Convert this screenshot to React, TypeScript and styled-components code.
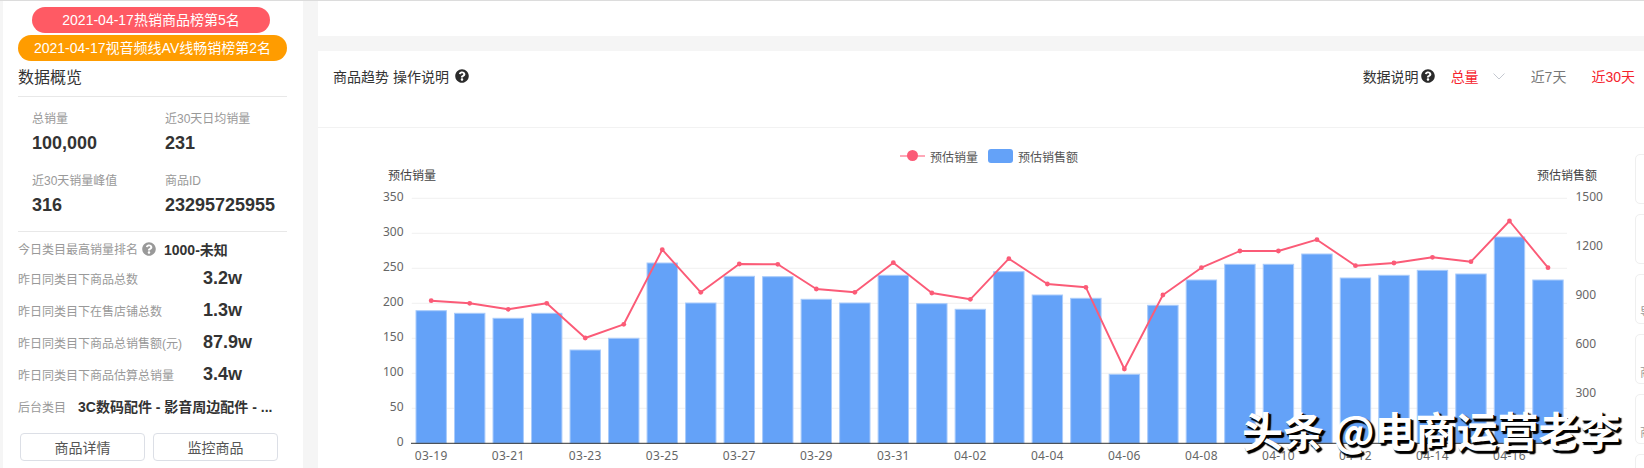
import React from 'react';
import styled, { createGlobalStyle } from 'styled-components';
import { FaQuestionCircle } from 'react-icons/fa';

const Global = createGlobalStyle`
  html, body { margin: 0; padding: 0; background: #f5f5f5; }
  body { font-family: "Liberation Sans", "Noto Sans CJK SC", sans-serif; }
  * { box-sizing: border-box; }
`;

const Page = styled.div`
  position: relative;
  width: 1644px;
  height: 468px;
  overflow: hidden;
  display: grid;
  grid-template-columns: 300px 1fr;
  column-gap: 15px;
  padding-left: 3px;
  background: #f5f5f5;
  border-top: 1px solid #dcdcdc;
`;

const Side = styled.aside`
  background: #fff;
  padding: 6px 16px 0 15px;
  display: flex;
  flex-direction: column;
`;

const Badge = styled.div<{ $bg: string; $w: number; $mx: number }>`
  width: ${p => p.$w}px;
  height: 26px;
  margin-left: ${p => p.$mx}px;
  margin-bottom: 2px;
  border-radius: 13px;
  background: ${p => p.$bg};
  color: #fff;
  font-size: 14px;
  line-height: 26px;
  text-align: center;
  white-space: nowrap;
`;

const SideTitle = styled.h2`
  margin: 2px 0 0;
  height: 32px;
  font-size: 16px;
  line-height: 26px;
  font-weight: 400;
  color: #333;
  border-bottom: 1px solid #e8e8e8;
`;

const StatGrid = styled.div`
  display: grid;
  grid-template-columns: 133px 1fr;
  grid-auto-rows: 62px;
  padding: 14px 0 0 14px;
  height: 135px;
  border-bottom: 1px solid #e8e8e8;
`;

const Stat = styled.div`
  display: flex;
  flex-direction: column;
  gap: 4px;
`;

const StatLabel = styled.span`
  font-size: 12px;
  line-height: 17px;
  color: #999;
`;

const StatValue = styled.span`
  font-size: 18px;
  line-height: 22px;
  font-weight: 700;
  color: #333;
`;

const InfoList = styled.div`
  display: flex;
  flex-direction: column;
  padding-top: 3px;
`;

const InfoRow = styled.div<{ $h?: number }>`
  height: ${p => p.$h ?? 32}px;
  display: flex;
  align-items: center;
`;

const InfoLabel = styled.span<{ $w?: number }>`
  font-size: 12px;
  color: #999;
  white-space: nowrap;
  flex: 0 0 ${p => (p.$w ? `${p.$w}px` : 'auto')};
`;

const Metric = styled.span`
  font-size: 18px;
  font-weight: 700;
  color: #333;
`;

const Strong = styled.span<{ $ml?: number }>`
  margin-left: ${p => p.$ml ?? 0}px;
  font-size: 14px;
  font-weight: 700;
  color: #333;
  white-space: nowrap;
`;

const HintIcon = styled(FaQuestionCircle)<{ $c: string; $ml?: number }>`
  width: 14px;
  height: 14px;
  margin-left: ${p => p.$ml ?? 0}px;
  color: ${p => p.$c};
  flex: none;
`;

const ButtonRow = styled.div`
  display: flex;
  gap: 8px;
  margin: 11px 0 0 2px;
`;

const Btn = styled.button`
  width: 125px;
  height: 28px;
  padding: 0;
  background: #fff;
  border: 1px solid #dcdfe6;
  border-radius: 4px;
  font: 14px "Liberation Sans", "Noto Sans CJK SC", sans-serif;
  color: #555;
`;

const Main = styled.main`
  display: flex;
  flex-direction: column;
  gap: 15px;
`;

const TopStrip = styled.div`
  height: 35px;
  background: #fff;
  flex: none;
`;

const Card = styled.section`
  flex: 1;
  background: #fff;
  min-height: 0;
`;

const CardHead = styled.header`
  height: 77px;
  padding: 0 9px 26px 15px;
  display: flex;
  align-items: center;
  border-bottom: 1px solid #f2f2f2;
  font-size: 14px;
  color: #333;
`;

const HeadTitle = styled.span`
  margin-right: 6px;
  white-space: nowrap;
`;

const HeadRight = styled.div`
  margin-left: auto;
  display: flex;
  align-items: center;
  white-space: nowrap;
`;

const HeadOption = styled.span<{ $active?: boolean; $ml: number }>`
  margin-left: ${p => p.$ml}px;
  color: ${p => (p.$active ? '#f5222d' : '#777')};
`;

const Chevron = styled.svg`
  width: 12px;
  height: 7px;
  margin-left: 14px;
  fill: none;
  stroke: #c4c8d0;
  stroke-width: 1;
`;

const Legend = styled.div`
  height: 16px;
  margin: 20px 0 2px;
  padding-left: 16px;
  display: flex;
  justify-content: center;
  align-items: center;
  font-size: 12px;
  color: #555;
`;

const LegendLine = styled.span`
  position: relative;
  width: 25px;
  height: 2px;
  background: #ffa8b8;
  margin-right: 5px;
  &::after {
    content: '';
    position: absolute;
    left: 7px;
    top: -5px;
    width: 11px;
    height: 11px;
    border-radius: 50%;
    background: #fb5b77;
  }
`;

const LegendBox = styled.span`
  width: 25px;
  height: 14px;
  border-radius: 3px;
  background: #64a2f8;
  margin: 0 5px 0 10px;
`;

const ChartSvg = styled.svg`
  display: block;
  width: 1326px;
  height: 302px;
  text {
    font-family: "Noto Sans", "Noto Sans CJK SC", sans-serif;
    font-size: 12px;
    fill: #666;
  }
  text.title {
    fill: #444;
  }
`;

const Rail = styled.div`
  position: absolute;
  left: 1635px;
  top: 153px;
  display: flex;
  flex-direction: column;
  gap: 10px;
`;

const RailCard = styled.div`
  width: 40px;
  height: 50px;
  padding: 0 0 3px 4px;
  background: #fff;
  border: 1px solid #efefef;
  border-radius: 5px;
  display: flex;
  align-items: flex-end;
  font-size: 12px;
  color: #999;
`;

const Watermark = styled.div`
  position: absolute;
  left: 1242px;
  top: 400px;
  font-family: "Noto Sans CJK SC", sans-serif;
  font-size: 41px;
  line-height: 56px;
  font-weight: 700;
  color: #fff;
  white-space: nowrap;
  text-shadow: 2px 3px 1px #000, 3px 2px 1px #000, 1px 1px 0 #000;
`;

const barTops = [310.7, 313.3, 318.3, 313.3, 350, 338.3, 263, 303, 276.3, 276.7, 299.3, 303, 275.3, 303.7, 309.3, 271.7, 295, 298.3, 374.3, 305.3, 280, 264.3, 264.3, 254, 278, 275.3, 270.3, 274, 237, 280];
const linePts = [300.7, 303.3, 309.3, 303.3, 338, 324.3, 249.7, 292.3, 264, 264.3, 289, 292.3, 262.7, 293, 299.3, 258.7, 284, 287.3, 369, 295, 267.7, 251, 251, 239.7, 265.7, 263, 257.3, 261.7, 221, 267.7];
const xLabels = ['03-19', '03-21', '03-23', '03-25', '03-27', '03-29', '03-31', '04-02', '04-04', '04-06', '04-08', '04-10', '04-12', '04-14', '04-16'];

const BASE = 443.3;
const cx = (i: number) => 431.2 + i * 38.51;

const stats = [
  ['总销量', '100,000'],
  ['近30天日均销量', '231'],
  ['近30天销量峰值', '316'],
  ['商品ID', '23295725955'],
];
const metrics = [
  ['昨日同类目下商品总数', '3.2w'],
  ['昨日同类目下在售店铺总数', '1.3w'],
  ['昨日同类目下商品总销售额(元)', '87.9w'],
  ['昨日同类目下商品估算总销量', '3.4w'],
];

function Chart() {
  const grid = [0, 1, 2, 3, 4, 5, 6, 7].map(n => BASE - n * 35);
  return (
    <ChartSvg viewBox="318 166 1326 302">
      {grid.slice(1).map(y => (
        <line key={y} x1={411.7} x2={1567} y1={y} y2={y} stroke="#f0f0f0" />
      ))}
      {barTops.map((t, i) => (
        <rect key={i} x={cx(i) - 15.2} y={t} width={30.4} height={BASE - t} fill="#64a2f8" stroke="#a9cbfb" strokeWidth={1} />
      ))}
      <line x1={411} x2={1567} y1={BASE} y2={BASE} stroke="#333" />
      <polyline points={linePts.map((y, i) => `${cx(i)},${y}`).join(' ')} fill="none" stroke="#fb5b77" strokeWidth={1.9} strokeLinejoin="round" />
      {linePts.map((y, i) => (
        <circle key={i} cx={cx(i)} cy={y} r={2.4} fill="#fb5b77" />
      ))}
      <text className="title" x={388} y={180}>预估销量</text>
      <text className="title" x={1537} y={180}>预估销售额</text>
      {grid.map((y, n) => (
        <text key={n} x={403.5} y={y + 3} textAnchor="end">{n * 50}</text>
      ))}
      {[300, 600, 900, 1200, 1500].map((v, n) => (
        <text key={v} x={1575.5} y={392.7 - n * 49 + 4.5}>{v}</text>
      ))}
      {xLabels.map((l, n) => (
        <text key={l} x={cx(n * 2)} y={460} textAnchor="middle" letterSpacing={0.3}>{l}</text>
      ))}
    </ChartSvg>
  );
}

export default function App() {
  return (
    <>
      <Global />
      <Page>
        <Side>
          <Badge $bg="#ff5a64" $w={238} $mx={14}>2021-04-17热销商品榜第5名</Badge>
          <Badge $bg="#ff9c00" $w={269} $mx={0}>2021-04-17视音频线AV线畅销榜第2名</Badge>
          <SideTitle>数据概览</SideTitle>
          <StatGrid>
            {stats.map(([l, v]) => (
              <Stat key={l}>
                <StatLabel>{l}</StatLabel>
                <StatValue>{v}</StatValue>
              </Stat>
            ))}
          </StatGrid>
          <InfoList>
            <InfoRow $h={27}>
              <InfoLabel>今日类目最高销量排名</InfoLabel>
              <HintIcon $c="#999" $ml={4} />
              <Strong $ml={8}>1000-未知</Strong>
            </InfoRow>
            {metrics.map(([l, v]) => (
              <InfoRow key={l}>
                <InfoLabel $w={185}>{l}</InfoLabel>
                <Metric>{v}</Metric>
              </InfoRow>
            ))}
            <InfoRow>
              <InfoLabel $w={60}>后台类目</InfoLabel>
              <Strong>3C数码配件 - 影音周边配件 - ...</Strong>
            </InfoRow>
          </InfoList>
          <ButtonRow>
            <Btn>商品详情</Btn>
            <Btn>监控商品</Btn>
          </ButtonRow>
        </Side>
        <Main>
          <TopStrip />
          <Card>
            <CardHead>
              <HeadTitle>商品趋势 操作说明</HeadTitle>
              <HintIcon $c="#2b2b2b" />
              <HeadRight>
                <span>数据说明</span>
                <HintIcon $c="#2b2b2b" $ml={2} />
                <HeadOption $active $ml={16}>总量</HeadOption>
                <Chevron viewBox="0 0 12 7"><polyline points="0.5,0.5 6,6 11.5,0.5" /></Chevron>
                <HeadOption $ml={26}>近7天</HeadOption>
                <HeadOption $active $ml={25}>近30天</HeadOption>
              </HeadRight>
            </CardHead>
            <Legend>
              <LegendLine />
              <span>预估销量</span>
              <LegendBox />
              <span>预估销售额</span>
            </Legend>
            <Chart />
          </Card>
        </Main>
        <Rail>
          <RailCard />
          <RailCard />
          <RailCard>导</RailCard>
          <RailCard>商</RailCard>
          <RailCard>商</RailCard>
          <RailCard />
        </Rail>
        <Watermark>头条 @电商运营老李</Watermark>
      </Page>
    </>
  );
}
